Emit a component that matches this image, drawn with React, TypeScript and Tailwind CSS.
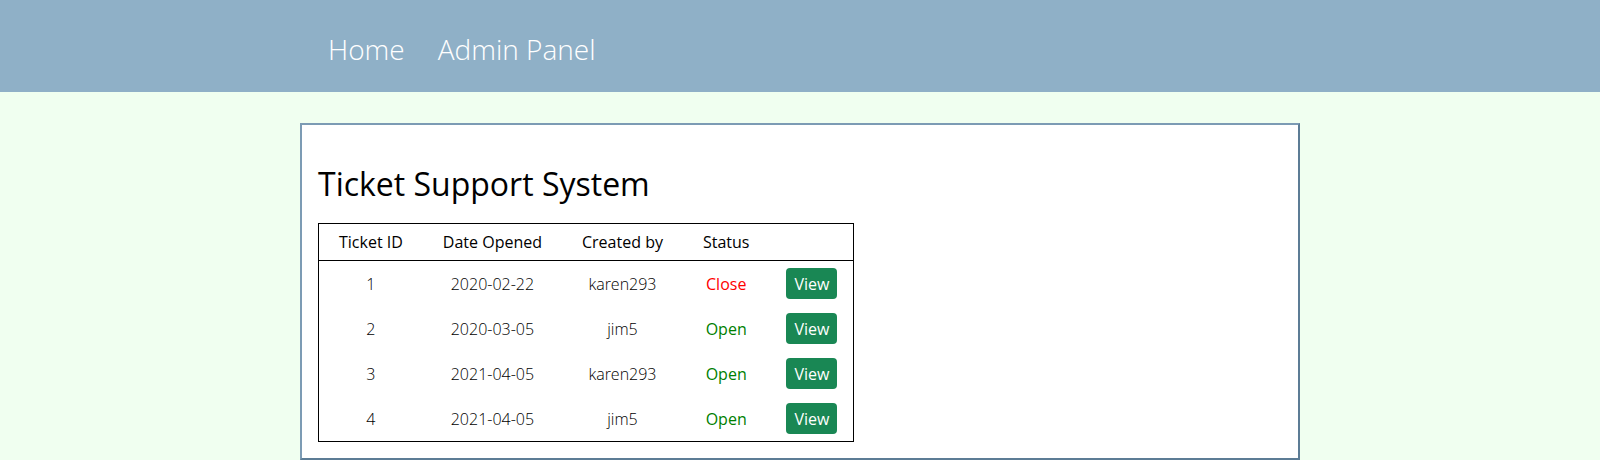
const tickets = [
  { id: 1, opened: "2020-02-22", by: "karen293", status: "Close" },
  { id: 2, opened: "2020-03-05", by: "jim5", status: "Open" },
  { id: 3, opened: "2021-04-05", by: "karen293", status: "Open" },
  { id: 4, opened: "2021-04-05", by: "jim5", status: "Open" },
];

export default function App() {
  return (
    <div className="min-h-screen bg-[#f0fff0] font-['Open_Sans',sans-serif]">
      <nav className="h-[92px] bg-[#8fb0c7] flex items-center pt-[6px]">
        <div className="w-[1000px] mx-auto flex items-center gap-[33px] pl-[28px] text-[28px] font-light text-white">
          <a href="#">Home</a>
          <a href="#">Admin Panel</a>
        </div>
      </nav>

      <main className="pt-[31px]">
        <div className="w-[1000px] mx-auto bg-white border-2 border-t-[#7c9bb4] border-l-[#7c9bb4] border-r-[#5c7c95] border-b-[#5c7c95] px-4 pt-[40px] pb-4">
          <h1 className="text-[32px] leading-[1.2] text-black">Ticket Support System</h1>

          <table className="mt-[20px] border border-black border-collapse text-base">
            <thead>
              <tr className="border-b border-black">
                <th className="px-5 py-1.5 font-medium text-black">Ticket ID</th>
                <th className="px-5 py-1.5 font-medium text-black">Date Opened</th>
                <th className="px-5 py-1.5 font-medium text-black">Created by</th>
                <th className="px-5 py-1.5 font-medium text-black">Status</th>
                <th className="px-5 py-1.5"></th>
              </tr>
            </thead>
            <tbody>
              {tickets.map((t) => (
                <tr key={t.id}>
                  <td className="px-5 py-[7px] text-center font-light text-black">{t.id}</td>
                  <td className="px-5 py-[7px] text-center font-light text-black">{t.opened}</td>
                  <td className="px-5 py-[7px] text-center font-light text-black">{t.by}</td>
                  <td
                    className={`px-5 py-[7px] text-center font-medium ${
                      t.status === "Open" ? "text-[#008000]" : "text-[#ff0000]"
                    }`}
                  >
                    {t.status}
                  </td>
                  <td className="pl-[17px] pr-4 py-[7px] text-center">
                    <button className="h-[31px] bg-[#198754] text-white rounded-[4px] px-2 leading-6">
                      View
                    </button>
                  </td>
                </tr>
              ))}
            </tbody>
          </table>
        </div>
      </main>
    </div>
  );
}
